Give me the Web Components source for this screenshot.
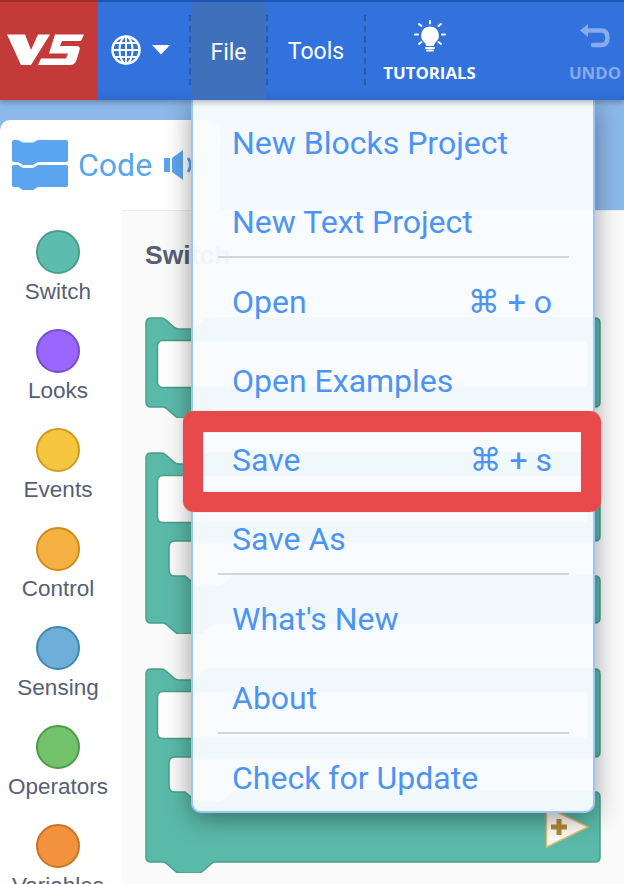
<!DOCTYPE html>
<html>
<head>
<meta charset="utf-8">
<title>VEX V5 Blocks</title>
<style>
  html, body { margin: 0; padding: 0; }
  body {
    width: 624px;
    height: 884px;
    overflow: hidden;
    position: relative;
    background: #fff;
    font-family: "Liberation Sans", sans-serif;
  }
  .main { display: grid; grid-template-columns: 122px 1fr; height: 674px; }
</style>
</head>
<body>
  <vex-header></vex-header>
  <code-tab></code-tab>
  <div class="main">
    <tool-box>
      <tool-category fill="#5cbcae" line="#4a9f86">Switch</tool-category>
      <tool-category fill="#9966ff" line="#774dcb">Looks</tool-category>
      <tool-category fill="#f7c63f" line="#cc9a1f">Events</tool-category>
      <tool-category fill="#f6b143" line="#cf8b17">Control</tool-category>
      <tool-category fill="#6eaed8" line="#3d87b0">Sensing</tool-category>
      <tool-category fill="#72c16b" line="#4f9a48">Operators</tool-category>
      <tool-category fill="#f2923c" line="#cc7226">Variables</tool-category>
    </tool-box>
    <block-palette title-text="Switch">
      <block-shape kind="single"></block-shape>
      <block-shape kind="double"></block-shape>
      <block-shape kind="double-tall"></block-shape>
    </block-palette>
  </div>

  <file-menu>
    <menu-item>New Blocks Project</menu-item>
    <menu-item divider>New Text Project</menu-item>
    <menu-item keys="⌘ + o">Open</menu-item>
    <menu-item>Open Examples</menu-item>
    <menu-item keys="⌘ + s">Save</menu-item>
    <menu-item divider>Save As</menu-item>
    <menu-item>What's New</menu-item>
    <menu-item divider>About</menu-item>
    <menu-item>Check for Update</menu-item>
  </file-menu>
  <mark-box></mark-box>

<script>
class VexHeader extends HTMLElement {
  constructor() {
    super();
    this.shadow = this.attachShadow({ mode: 'open' });
    this.shadow.innerHTML = `
      <style>
        :host {
          display: flex;
          position: relative;
          z-index: 2;
          height: 100px;
          background: linear-gradient(#1f56b5 2px, #3272dd 2px, #3272dd 90%, #2f69cc);
          box-shadow: 0 2px 6px rgba(0, 0, 0, .3);
          overflow: hidden;
          color: #fff;
          font-family: Roboto, sans-serif;
        }
        .logo { width: 98px; box-sizing: border-box; border-top: 2px solid #a32b29; background: #c33a38; flex: none; }
        .logo svg { display: block; margin-top: -2px; }
        .lang { width: 91px; flex: none; display: flex; align-items: center; padding-left: 13px; box-sizing: border-box; gap: 11px; }
        .sep { width: 0; flex: none; align-self: center; height: 70px; border-left: 2px dashed #2a5aa6; }
        .menu { flex: none; display: flex; align-items: center; justify-content: center; font-size: 23px; padding-top: 3px; box-sizing: border-box; }
        .file { width: 75px; margin-top: 2px; background: #3f70bb; }
        .tools { width: 96px; }
        .big {
          flex: none;
          display: flex;
          flex-direction: column;
          align-items: center;
          font: 700 16.8px "Open Sans", sans-serif;
        }
        .tut { width: 127px; padding-top: 20px; gap: 11px; }
        .undo { width: 60px; margin-left: 72px; padding-top: 24px; gap: 15px; color: #88abe9; }
        .big svg { display: block; }
        .big span { line-height: 20px; }
      </style>
      <div class="logo">
        <svg width="98" height="100" viewBox="0 0 98 100" fill="#fff">
          <path d="M7 34.5H25L31 50L38 34.5H50L31 65H21Z"/>
          <path d="M55 34.5H84L81 41H62L60 46H76Q81 46 79.5 50L76.500 60Q75 65 70 65H38L41 58.500H66L68 53.500H49Z"/>
        </svg>
      </div>
      <div class="lang">
        <svg width="30" height="30" viewBox="0 0 30 30" fill="none" stroke="#fff" stroke-width="2">
          <circle cx="15" cy="15" r="13.500" stroke-width="2.500"/>
          <ellipse cx="15" cy="15" rx="6.500" ry="13.500"/>
          <path d="M15 1.500V28.500M1.500 15H28.500M3.500 8H26.500M3.500 22H26.500"/>
        </svg>
        <svg width="18" height="10" viewBox="0 0 18 10"><path d="M0 0H18L9 9.500Z" fill="#fff"/></svg>
      </div>
      <div class="sep"></div>
      <div class="menu file">File</div>
      <div class="sep"></div>
      <div class="menu tools">Tools</div>
      <div class="sep"></div>
      <div class="big tut">
        <svg width="32" height="32" viewBox="0 0 32 32">
          <path d="M16 6.500a9 9 0 0 0-5.500 16c1 1 1.500 2 1.500 3.500h8c0-1.500.5-2.500 1.500-3.500a9 9 0 0 0-5.500-16Z" fill="#fff"/>
          <path d="M12 28h8M13 30.500h6" stroke="#fff" stroke-width="2" stroke-linecap="round"/>
          <path d="M16 0.500v3M5 4l2.500 2M27 4l-2.500 2M1 14.500h3M31 14.500h-3M5 24l2.500-2M27 24l-2.500-2" stroke="#fff" stroke-width="2" stroke-linecap="round"/>
        </svg>
        <span>TUTORIALS</span>
      </div>
      <div class="big undo">
        <svg width="30" height="24" viewBox="0 0 30 24" fill="none">
          <path d="M8 0V13L0 6.500Z" fill="#88abe9"/>
          <path d="M7 6.500H21C25.500 6.500 27.500 9 27.500 13.500C27.500 18.500 25.500 21 21 21H13" stroke="#88abe9" stroke-width="4.500" stroke-linecap="round"/>
        </svg>
        <span>UNDO</span>
      </div>
    `;
  }
}

class CodeTab extends HTMLElement {
  constructor() {
    super();
    this.shadow = this.attachShadow({ mode: 'open' });
    this.shadow.innerHTML = `
      <style>
        :host {
          display: block;
          height: 90px;
          padding-top: 20px;
          background: #8db8ea;
        }
        .tab {
          width: 220px;
          height: 90px;
          box-sizing: border-box;
          background: #fff;
          border-radius: 10px 12px 0 0;
          display: flex;
          align-items: center;
          padding: 0 0 0 12px;
          color: #5aa5ee;
          font: 32px Roboto, sans-serif;
        }
        svg { display: block; flex: none; }
        .code { margin: 0 11px 0 9px; }
      </style>
      <div class="tab">
        <svg width="57" height="52" viewBox="0 0 57 52" fill="#5aa5ee">
          <path d="M2 1H6L11 3.500H21L26 1H54Q56 1 56 3V21Q56 23 54 23H26L21 26H11L6 23H2Q0 23 0 21V3Q0 1 2 1Z"/>
          <path d="M2 26H6L11 29H21L26 26H54Q56 26 56 28V46Q56 48 54 48H26L21 51H11L6 48H2Q0 48 0 46V28Q0 26 2 26Z"/>
        </svg>
        <span class="code">Code</span>
        <svg width="32" height="34" viewBox="0 0 32 34" fill="#5aa5ee">
          <path d="M1 10H7V24H1ZM9 10L20 2V32L9 24Z"/>
          <path d="M25 10Q30 17 25 24" fill="none" stroke="#5aa5ee" stroke-width="3"/>
        </svg>
      </div>
    `;
  }
}

class ToolBox extends HTMLElement {
  constructor() {
    super();
    this.shadow = this.attachShadow({ mode: 'open' });
    this.shadow.innerHTML = `
      <style>
        :host {
          display: flex;
          flex-direction: column;
          padding-top: 20px;
          background: #fff;
          overflow: hidden;
        }
      </style>
      <slot></slot>
    `;
  }
}

class ToolCategory extends HTMLElement {
  constructor() {
    super();
    this.shadow = this.attachShadow({ mode: 'open' });
    this.shadow.innerHTML = `
      <style>
        :host {
          display: flex;
          flex-direction: column;
          align-items: center;
          width: 116px;
          height: 99px;
          flex: none;
          color: #575e75;
          font: 22.5px "Liberation Sans", sans-serif;
        }
        .dot {
          width: 44px;
          height: 44px;
          box-sizing: border-box;
          border-radius: 50%;
          border: 2px solid;
          margin-bottom: 4px;
        }
        span { line-height: 28px; white-space: nowrap; }
      </style>
      <div class="dot"></div>
      <span><slot></slot></span>
    `;
  }
  connectedCallback() {
    const dot = this.shadowRoot.querySelector('.dot');
    dot.style.background = this.getAttribute('fill');
    dot.style.borderColor = this.getAttribute('line');
  }
}

class BlockPalette extends HTMLElement {
  constructor() {
    super();
    this.shadow = this.attachShadow({ mode: 'open' });
    this.shadow.innerHTML = `
      <style>
        :host {
          display: flex;
          flex-direction: column;
          gap: 34px;
          padding: 29px 0 0 23px;
          background: #fafafa;
          box-shadow: inset 0 1px 0 #eeeeee;
          overflow: hidden;
        }
        h2 {
          margin: 0;
          height: 44px;
          color: #575e75;
          font: 700 26.5px/32px "Liberation Sans", sans-serif;
        }
      </style>
      <h2></h2>
      <slot></slot>
    `;
  }
  connectedCallback() {
    this.shadowRoot.querySelector('h2').textContent = this.getAttribute('title-text');
  }
}

class BlockShape extends HTMLElement {
  constructor() {
    super();
    this.shadow = this.attachShadow({ mode: 'open' });
  }
  connectedCallback() {
    const kind = this.getAttribute('kind');
    const h = { single: 101, double: 182, 'double-tall': 205 }[kind];
    const bottom = h - 11;
    const notchBottom = `H70Q68 ${bottom} 66 ${bottom + 2}L58 ${h - 2}Q56 ${h} 53 ${h}H35Q32 ${h} 30 ${h - 2}L22 ${bottom + 2}Q20 ${bottom} 18 ${bottom}H6Q1 ${bottom} 1 ${bottom - 5}V6Q1 1 6 1H16Q19 1 21 3L29 10Q31 12 34 12H47`;
    const top = 'M47 12Q52 12 55 8Q58 1 66 1H450Q455 1 455 6';

    let outline;
    if (kind === 'single') {
      outline = `${top}V${bottom - 5}Q455 ${bottom} 450 ${bottom}${notchBottom}Z`;
    } else {
      // C shape: the mouth is open to the right between the two arms
      outline = `${top}V84Q455 89 450 89H30Q24 89 24 95V118Q24 124 30 124H40L53 135H75L88 124H450Q455 124 455 129V${bottom - 5}Q455 ${bottom} 450 ${bottom}${notchBottom}Z`;
    }

    const plus = kind === 'double-tall' ? `
      <path d="M401.500 139L443 159L401.500 179Z" fill="#fdfcf6" stroke="#e6bb72" stroke-width="1.500"/>
      <path d="M406 159H422M414 151V167" stroke="#b5893a" stroke-width="5"/>` : '';

    this.shadow.innerHTML = `
      <style>
        :host { display: block; width: 456px; height: ${h}px; }
        svg { display: block; }
      </style>
      <svg width="456" height="${h}" viewBox="0 0 456 ${h}">
        <path d="${outline}" fill="#5abaa9" stroke="#4a9f86" stroke-width="1.500"/>
        <rect x="12.500" y="23.500" width="431" height="47" rx="5" fill="#fff" stroke="#4a9f86" stroke-width="1.500"/>
        ${plus}
      </svg>
    `;
  }
}

class FileMenu extends HTMLElement {
  constructor() {
    super();
    this.shadow = this.attachShadow({ mode: 'open' });
    this.shadow.innerHTML = `
      <style>
        :host {
          display: block;
          position: absolute;
          z-index: 1;
          left: 191px;
          top: 100px;
          width: 404px;
          box-sizing: border-box;
          padding: 3px 0 0;
          height: 713px;
          background: rgba(248, 251, 255, .96);
          border: 2px solid #9cc6f5;
          border-top: 0;
          border-radius: 0 0 10px 10px;
          box-shadow: 0 6px 26px rgba(0, 0, 0, .38);
        }
      </style>
      <slot></slot>
    `;
  }
}

class MenuItem extends HTMLElement {
  constructor() {
    super();
    this.shadow = this.attachShadow({ mode: 'open' });
    this.shadow.innerHTML = `
      <style>
        :host {
          display: block;
          color: #4d94f2;
          font: 32px Roboto, sans-serif;
        }
        .row {
          display: flex;
          justify-content: space-between;
          align-items: center;
          height: 79px;
          padding: 0 41px 0 39px;
        }
        .keys { font-family: Roboto, "DejaVu Sans", sans-serif; }
        hr {
          display: none;
          height: 2px;
          margin: -5px 24px 4px 25px;
          border: 0;
          background: #d2d5da;
        }
        :host([divider]) hr { display: block; }
      </style>
      <div class="row"><span><slot></slot></span><span class="keys"></span></div>
      <hr>
    `;
  }
  connectedCallback() {
    this.shadowRoot.querySelector('.keys').textContent = this.getAttribute('keys') || '';
  }
}

class MarkBox extends HTMLElement {
  constructor() {
    super();
    this.shadow = this.attachShadow({ mode: 'open' });
    this.shadow.innerHTML = `
      <style>
        :host {
          display: block;
          position: absolute;
          z-index: 3;
          left: 183px;
          top: 411px;
          width: 418px;
          height: 101px;
          box-sizing: border-box;
          border: solid #e84a4c;
          border-width: 21px 20px 20px;
          border-radius: 11px;
          box-shadow: 0 0 1px #e88, inset 0 0 1px #e88;
        }
      </style>
    `;
  }
}

customElements.define('vex-header', VexHeader);
customElements.define('code-tab', CodeTab);
customElements.define('tool-box', ToolBox);
customElements.define('tool-category', ToolCategory);
customElements.define('block-palette', BlockPalette);
customElements.define('block-shape', BlockShape);
customElements.define('file-menu', FileMenu);
customElements.define('menu-item', MenuItem);
customElements.define('mark-box', MarkBox);
</script>
</body>
</html>
